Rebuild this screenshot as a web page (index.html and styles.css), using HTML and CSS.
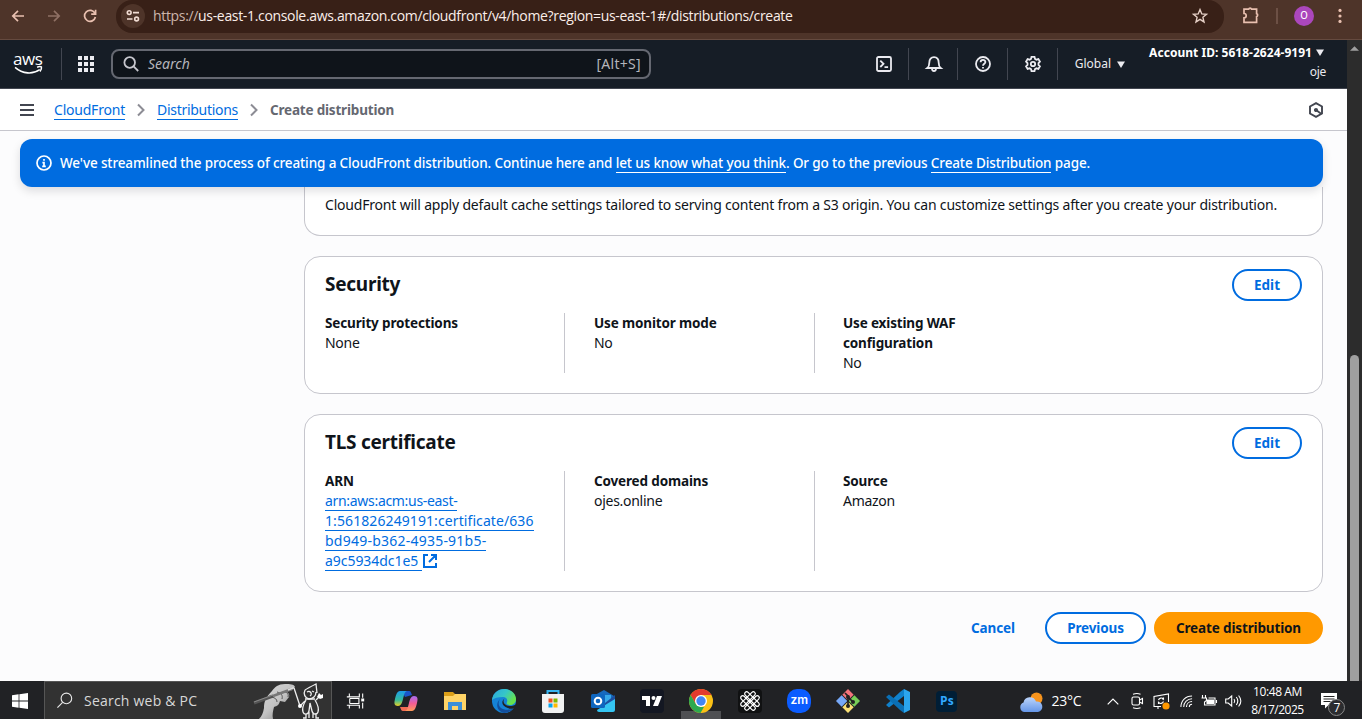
FILE: index.html
```html
<!DOCTYPE html>
<html lang="en">
<head>
<meta charset="utf-8">
<title>Create distribution</title>
<link rel="stylesheet" href="styles.css">
</head>
<body>
<div class="chrome">
  <svg class="nav-ic" viewBox="0 0 16 16"><path d="M14 8H2.8M8 2.8 2.8 8 8 13.2"/></svg>
  <svg class="nav-ic dim" viewBox="0 0 16 16"><path d="M2 8h11.2M8 2.8 13.2 8 8 13.2"/></svg>
  <svg class="nav-ic" viewBox="0 0 16 16"><path d="M13 5.5A5.5 5.5 0 1 0 13.4 9M13.6 1.8v4.4H9.2"/></svg>
  <div class="omnibox">
    <span class="site"><svg viewBox="0 0 14 14"><circle cx="3.2" cy="3.6" r="1.9"/><path d="M7 3.6h6M1 10h5.5"/><circle cx="10.6" cy="10" r="1.9"/></svg></span>
    <span class="url"><i>https://</i>us-east-1.console.aws.amazon.com/cloudfront/v4/home?region=us-east-1#/distributions/create</span>
    <svg class="star" viewBox="0 0 16 16"><path d="m8 1.600 1.800 4.300 4.700.4-3.600 3 1.100 4.600L8 11.400l-4 2.500 1.100-4.600-3.600-3 4.700-.4z"/></svg>
  </div>
  <svg class="puzzle" viewBox="0 0 18 18"><path d="M2 3.200h4.600a1.600 1.600 0 0 1 3 0h5v4.400a1.600 1.600 0 0 1 0 3v5.800H2v-4.500a2.200 2.200 0 0 0 0-4.400z"/></svg>
  <span class="chrome-sep"></span>
  <span class="avatar">O</span>
  <svg class="dots" viewBox="0 0 4 16"><circle cx="2" cy="2.400" r="1.600"/><circle cx="2" cy="8" r="1.600"/><circle cx="2" cy="13.400" r="1.600"/></svg>
</div>

<div class="viewport">
  <div class="page">
    <header class="aws">
      <div class="logo"><span class="aws-word">aws</span><svg viewBox="0 0 32 10"><path d="M.5 1.500C9 9 20 9.500 28 4"/><path d="M25 1.400c2-.9 4-.8 4.800-.4.300 1.300-.3 3.500-1.600 5"/></svg></div>
      <svg class="grid" viewBox="0 0 16 16"><path d="M0 0h4v4H0zM6 0h4v4H6zM12 0h4v4h-4zM0 6h4v4H0zM6 6h4v4H6zM12 6h4v4h-4zM0 12h4v4H0zM6 12h4v4H6zM12 12h4v4h-4z"/></svg>
      <div class="search">
        <svg viewBox="0 0 16 16"><circle cx="6.700" cy="6.500" r="5.300"/><path d="m10.600 10.400 4.600 4.600"/></svg>
        <span class="ph">Search</span><span class="key">[Alt+S]</span>
      </div>
      <div class="tools">
        <span class="tool"><svg viewBox="0 0 16 16"><rect x="1" y="1" width="14" height="14" rx="1.500"/><path d="m4.300 4.600 3.200 3.200-3.200 3.200M8.500 11.200h3.600"/></svg></span>
        <span class="tool"><svg viewBox="0 0 16 16"><path d="M1.300 12h13.400c-1.700-1.300-2-2.800-2-5.300C12.700 3.300 10.900 1.100 8 1.100S3.300 3.300 3.300 6.700c0 2.500-.3 4-2 5.300zM6 12.500c0 3.300 4 3.300 4 0"/></svg></span>
        <span class="tool"><svg viewBox="0 0 16 16"><circle cx="8" cy="8" r="7"/><path d="M5.600 6.300c0-3.100 4.800-3.100 4.800-.2C10.400 7.900 8 7.800 8 9.800M8 11v1.600"/></svg></span>
        <span class="tool"><svg viewBox="0 0 16 16"><path d="M6.500.9h3l.5 2 1.400.8 2-.6 1.500 2.500L13.500 7v2l1.400 1.400-1.500 2.500-2-.6-1.400.8-.5 2h-3l-.5-2-1.400-.8-2 .6-1.500-2.500L2.500 9V7L1.100 5.600l1.500-2.500 2 .6L6 2.900z"/><circle cx="8" cy="8" r="2.200"/></svg></span>
      </div>
      <div class="region"><span class="t-global">Global</span><svg class="caret" viewBox="0 0 8 7"><path d="M0 .5h8L4 7z"/></svg></div>
      <div class="account"><div class="acc-line"><span class="t-acc">Account ID: 5618-2624-9191</span><svg class="caret" viewBox="0 0 8 7"><path d="M0 .5h8L4 7z"/></svg></div><div><span class="t-oje">oje</span></div></div>
    </header>

    <nav class="crumbs">
      <svg class="burger" viewBox="0 0 14 12"><path d="M0 1h14M0 6h14M0 11h14"/></svg>
      <a class="lnk c1">CloudFront</a>
      <svg class="chev" viewBox="0 0 8 14"><path d="m1 1.500 5.500 5.500L1 12.500"/></svg>
      <a class="lnk c2">Distributions</a>
      <svg class="chev" viewBox="0 0 8 14"><path d="m1 1.500 5.500 5.500L1 12.500"/></svg>
      <span class="here">Create distribution</span>
      <svg class="hex" viewBox="0 0 16 16"><path d="M8 1.100 14 4.500v7L8 14.900 2 11.500v-7z"/><path d="M13.500 12 8 8"/><circle cx="8" cy="8" r="1.100"/></svg>
    </nav>

    <div class="flash">
      <svg viewBox="0 0 16 16"><circle cx="8" cy="8" r="7"/><path d="M8 4v1.800M6.400 7.600H8v3.700M6.200 11.400h3.600"/></svg>
      <span class="t-flash">We've streamlined the process of creating a CloudFront distribution. Continue here and <a>let us know what you think</a>. Or go to the previous <a>Create Distribution</a> page.</span>
    </div>

    <main>
      <section class="card cut"><span class="t-body">CloudFront will apply default cache settings tailored to serving content from a S3 origin. You can customize settings after you create your distribution.</span></section>

      <section class="card sec">
        <div class="head"><h2>Security</h2><button class="btn edit">Edit</button></div>
        <div class="cols">
          <div><b>Security protections</b><p>None</p></div>
          <div><b>Use monitor mode</b><p>No</p></div>
          <div><b>Use existing WAF<br>configuration</b><p>No</p></div>
        </div>
      </section>

      <section class="card tls">
        <div class="head"><h2>TLS certificate</h2><button class="btn edit">Edit</button></div>
        <div class="cols">
          <div><b>ARN</b><p class="arn"><a class="lnk a1">arn:aws:acm:us-east-</a><br><a class="lnk a2">1:561826249191:certificate/636</a><br><a class="lnk a3">bd949-b362-4935-91b5-</a><br><a class="lnk a4">a9c5934dc1e5 </a><svg viewBox="0 0 14 14"><path d="M5 1H1v12h12V9M8 1h5v5M13 1 6 8"/></svg></p></div>
          <div><b>Covered domains</b><p>ojes.online</p></div>
          <div><b>Source</b><p>Amazon</p></div>
        </div>
      </section>

      <div class="actions"><a class="cancel">Cancel</a><button class="btn prev">Previous</button><button class="btn primary">Create distribution</button></div>
    </main>
  </div>
  <div class="scroll"><svg viewBox="0 0 10 5"><path d="M0 5 5 0l5 5z"/></svg><span class="thumb"></span></div>
</div>

<footer class="taskbar">
  <div class="start"><svg viewBox="0 0 16 16"><path d="M0 2.300 6.600 1.300v6.300H0zM7.400 1.200 16 0v7.600H7.400zM0 8.400h6.600v6.300L0 13.700zM7.400 8.400H16V16l-8.600-1.200z"/></svg></div>
  <div class="tsearch">
    <svg class="mag" viewBox="0 0 18 18"><circle cx="11" cy="6.800" r="5.600"/><path d="M7 11 1.500 16.500"/></svg>
    <span class="t-web">Search web &amp; PC</span>
    <svg class="hand" viewBox="0 0 74 36">
      <defs><linearGradient id="hg" x1="0" y1="0" x2="1" y2="1"><stop offset="0" stop-color="#d8d8d8"/><stop offset=".5" stop-color="#c4c4c4"/><stop offset="1" stop-color="#777"/></linearGradient></defs>
      <path fill="url(#hg)" d="M8 36c3-3 4-6 5-11 0-7 2-11 8-17 3-4 6-7 13-7 5 0 9 0 10 3l-3 3-7 2c3 0 5 2 4 5l-4 5-5-1c-1 4-3 5-6 6-1 4-2 8-1 12z"/>
      <path fill="none" stroke="#555" d="M26 9c4 1 6 3 5 7M21 14c3 1 5 2 5 5M33 9c3 0 5 2 4 5"/>
      <path stroke="#555" stroke-width="3.400" d="M3 20 22 13"/><path stroke="#8a8a8a" stroke-width="1" d="M3 19 22 12"/><path stroke="#777" stroke-width="2.400" d="m22 13 19-7"/><path stroke="#ddd" stroke-width="1.500" d="m37 7 6-2.500"/>
      <g fill="none" stroke="#eee" stroke-width="1.300"><path d="m43 5 6 18 5-5"/><path d="M54 7c3-2 7-4 11-6l1 9M54 7c-2 4 0 8 4 9 4 0 7-3 7-7"/><path d="M56 9c3-2 6 2 3 4M61 8l2 1M54 16h10M55 17c-3 5-4 9-3 12 1 3 5 3 6-1l1-8 2 8c1 4 5 4 6 1 1-3 0-7-3-12M65 17l4-4M55 31v4h-3M58 29v6M62 29v6M65 30v5h3"/></g>
      <circle cx="49" cy="23" r="2" fill="#fff"/><path fill="#fff" d="m68 10 2 2 2-1v4l-3 1-3-2z"/>
    </svg>
  </div>
  <div class="apps">
    <span class="app"><svg class="tv" viewBox="0 0 24 24"><path d="M4 3v4h12V3M4 21v-4h12v4M4.500 9h11v6h-11M1 7h3M1 17h3M4.500 9v6M20 3v5M20 14v7" fill="none" stroke="#fff" stroke-width="1.300"/><path d="M18.300 9h3.500v3.500h-3.500z" fill="#fff"/></svg></span>
    <span class="app"><svg viewBox="0 0 24 24"><defs><linearGradient id="c1" x1="0" y1="0" x2="0" y2="1"><stop offset="0" stop-color="#1c9ceb"/><stop offset=".6" stop-color="#35bb9b"/><stop offset="1" stop-color="#e8cf25"/></linearGradient><linearGradient id="c2" x1="0" y1="0" x2="0" y2="1"><stop offset="0" stop-color="#a46cf5"/><stop offset=".5" stop-color="#f45d94"/><stop offset="1" stop-color="#ff9b58"/></linearGradient></defs><path fill="#1a56c8" d="M8 2h7c2 0 2 2 3 4l-7 2z"/><path fill="url(#c1)" d="M6 2h7c-3 1-3 5-4 8-1 4-2 7-5 7-4 0-4-3-3-7C2 6 3 2 6 2z"/><path fill="#f26c55" d="M8 18h8l-3 4H9c-2 0-2-2-3-4z"/><path fill="url(#c2)" d="M18 22h-7c3-1 3-5 4-8 1-4 2-7 5-7 4 0 4 3 3 7-1 4-2 8-5 8z"/></svg></span>
    <span class="app"><svg viewBox="0 0 24 24"><path fill="#dc9f18" d="M1 3h9l2 2h10v4H1z"/><path fill="#ffd467" d="M1 7h9l2-2h11v16H1z"/><path fill="#3c8fd8" d="M5 13h14v8h-4v-4H9v4H5z"/></svg></span>
    <span class="app"><svg viewBox="0 0 24 24"><defs><linearGradient id="e1" x1="0" y1="0" x2="1" y2=".5"><stop offset="0" stop-color="#2ba7e0"/><stop offset=".55" stop-color="#36c6c8"/><stop offset="1" stop-color="#67e34c"/></linearGradient></defs><circle cx="12" cy="12" r="12" fill="#1583d6"/><path fill="#134e9c" d="M8 10c-4 6 1 13 13 10-3 3-6 4-9 4C5 22 3 15 8 10z"/><path fill="#212225" d="M12.500 9.500c-2.500 3 0 7.500 5 7.500 3 0 5-.5 7-2l-1 3.500c-3 2-7 1.500-10-.5-3.500-2-4.500-5.500-1-8.500z"/><path fill="url(#e1)" d="M0 11C1 4 6 0 12 0c7 0 12 5 12 10 0 4-3 6-6 6-3 0-4-1-3-3 1-3-1-5-4-5-5 0-9 1-11 3z"/></svg></span>
    <span class="app"><svg viewBox="0 0 24 24"><path d="M6.500 6V2h11v4" fill="none" stroke="#37b5f0" stroke-width="2"/><path fill="#f2f2f2" d="M1 5h22v16q0 3-3 3H4q-3 0-3-3z"/><path fill="#f15022" d="M7.500 9.500h4v4h-4z"/><path fill="#7fb900" d="M12.500 9.500h4v4h-4z"/><path fill="#05a5ef" d="M7.500 14.500h4v4h-4z"/><path fill="#ffb900" d="M12.500 14.500h4v4h-4z"/></svg></span>
    <span class="app"><svg viewBox="0 0 24 24"><path fill="#1769bd" d="m13 1 10 6v9H4V6z"/><path fill="#37a9ea" d="M7 6h13v9H7z"/><path fill="#1e4f9f" d="m24 6-10 8v5l10-7z"/><path fill="#35c5f2" d="M24 10v11q0 2-2 2H8q-2 0-2-2z"/><rect y="5" width="14" height="14" rx="1.500" fill="#0f66bf"/><circle cx="7" cy="12" r="3.300" fill="none" stroke="#fff" stroke-width="2"/></svg></span>
    <span class="app"><svg viewBox="0 0 24 24"><rect width="24" height="24" rx="4" fill="#131722"/><path fill="#fff" d="M2 7h8v10H6v-6H2zM17 7h5l-4 10h-5z"/><circle cx="13.500" cy="9" r="2" fill="#fff"/></svg></span>
    <span class="app on"><svg viewBox="0 0 24 24"><circle cx="12" cy="12" r="12" fill="#fbc116"/><path fill="#e33b2e" d="M1.600 6A12 12 0 0 1 22.400 6H12l-5.200 9z"/><path fill="#2da94f" d="M1.600 6 6.800 15l5.200 3h3l-3.500 6A12 12 0 0 1 1.600 6z"/><circle cx="12" cy="12" r="6" fill="#fff"/><circle cx="12" cy="12" r="4.700" fill="#4285f4"/></svg></span>
    <span class="app"><svg viewBox="0 0 24 24"><rect width="24" height="24" rx="4" fill="#101112"/><g fill="none" stroke="#fff" stroke-width="1.200"><g transform="rotate(45 12 12)"><rect x="2.500" y="7.200" width="19" height="4" rx="2"/><rect x="2.500" y="12.800" width="19" height="4" rx="2"/></g><g transform="rotate(-45 12 12)"><rect x="2.500" y="7.200" width="19" height="4" rx="2"/><rect x="2.500" y="12.800" width="19" height="4" rx="2"/></g></g></svg></span>
    <span class="app"><span class="zm">zm</span></span>
    <span class="app"><svg viewBox="0 0 24 24"><g transform="rotate(45 12 12)"><path fill="#76a8f8" d="M3.500 12.500h8v8h-8z"/><path fill="#f2737c" d="M3.500 3.500h8v8h-8z"/><path fill="#78ce58" d="M12.500 3.500h8v8h-8z"/><path fill="#fadf75" d="M12.500 12.500h8v8h-8z"/></g><path d="M9 4l3 3v11M12 8l5 5" stroke="#222" stroke-width="1.700" fill="none"/><circle cx="12" cy="8" r="2" fill="#222"/><circle cx="17" cy="13" r="2" fill="#222"/><circle cx="12" cy="17" r="2" fill="#222"/></svg></span>
    <span class="app"><svg viewBox="0 0 24 24"><path fill="#1081cc" d="M18 0v7L3 18.500 0 16 14 3z"/><path fill="#0a6fb5" d="M18 24v-7L3 5.500 0 8l14 13z"/><path fill="#2ba5ee" d="m18 0 6 3v18l-6 3z"/></svg></span>
    <span class="app"><span class="ps">Ps</span></span>
  </div>
  <div class="tray">
    <svg class="weather" viewBox="0 0 24 20"><defs><linearGradient id="wg" x1="0" y1="0" x2="0" y2="1"><stop offset="0" stop-color="#bcd5fb"/><stop offset="1" stop-color="#6596e8"/></linearGradient></defs><circle cx="17.500" cy="6.500" r="6" fill="#f7941d"/><path fill="url(#wg)" d="M5 20a5 5 0 0 1-.5-9.500A6.500 6.500 0 0 1 17 9.500 5.300 5.300 0 0 1 19 20z"/></svg>
    <span class="temp">23°C</span>
    <svg class="up" viewBox="0 0 12 7"><path d="m.7 6.300 5.300-5.300 5.300 5.300"/></svg>
    <svg class="ti meet" viewBox="0 0 12 16"><rect x="1" y="4" width="7.500" height="8" rx="1.500"/><path d="m8.500 7 3-1.500v5L8.500 9M2 1.300q4-1.500 7.500 0M2 14.700q4 1.500 7.500 0"/></svg>
    <svg class="ti upd" viewBox="0 0 17 17"><path d="M8 13.500H1V3.500L15.500 1v8M5 13.500V16"/><path d="M5.500 7a3 3 0 0 1 5-1V4.500M10.500 6H9M10.500 8.500a3 3 0 0 1-5 1V11"/><circle cx="13" cy="13" r="3.600" fill="#ff9800" stroke="none"/></svg>
    <svg class="ti wifi" viewBox="0 0 14 14"><path d="M1 13C1 6 6 1 13 1M4 13c0-5 4-9 9-9M7 13c0-3.500 2.500-6 6-6M10 13c0-2 1-3 3-3"/></svg>
    <svg class="ti bat" viewBox="0 0 16 12"><path d="M1.500 0v3M4.500 0v3M.5 3h5v2.500l-2 1.500v3H14V3H7.500M15.500 5v3"/><path fill="#fff" d="M6 5h6.500v3.500H6z"/></svg>
    <svg class="ti vol" viewBox="0 0 17 14"><path d="M.7 5v4h2.500l3.500 3V2L3.200 5zM9 5q1.500 2 0 4M11.300 3q3 4 0 8M13.600 1.500q4.500 5.500 0 11"/></svg>
    <div class="clock"><span class="t-time">10:48 AM</span><span class="t-date">8/17/2025</span></div>
    <div class="note"><svg viewBox="0 0 16 16"><path fill="#fff" d="M0 0h16v12H7.500L4 15.500V12H0z"/><path stroke="#222" d="M2.500 3.500h11M2.500 6h11M2.500 8.500h7"/></svg><span class="badge">7</span></div>
  </div>
</footer>
</body>
</html>
```
FILE: styles.css
```css
* { box-sizing: border-box; }
body { margin: 0; width: 1362px; height: 719px; overflow: hidden; display: flex; flex-direction: column; font: 14px/20px "Noto Sans", "Open Sans", sans-serif; color: #0f141a; background: #212225; }
svg { display: block; flex: none; overflow: visible; fill: none; }
h2, p { margin: 0; }

.chrome { height: 40px; flex: none; display: flex; align-items: flex-start; background: #4e3429; border-bottom: 1px solid #654a3f; padding-left: 10px; }
.nav-ic { width: 16px; height: 16px; margin-top: 8px; margin-right: 20px; stroke: #e9c0b0; stroke-width: 1.7; }
.dim { stroke: #8f7064; }
.omnibox { width: 1108px; height: 33px; margin-left: -2px; border-radius: 16px; background: #382017; display: flex; padding: 4px 16px 0 5px; }
.site { width: 24px; height: 24px; border-radius: 50%; background: #4e3429; display: flex; align-items: center; justify-content: center; }
.site svg { width: 14px; height: 14px; stroke: #f1dcd3; stroke-width: 1.6; }
.url { margin-left: 8px; font: 14px/24px "Open Sans", sans-serif; letter-spacing: -.333px; color: #fbeee9; white-space: nowrap; }
.url i { font-style: normal; color: #cdb5ab; }
.star { width: 16px; height: 16px; margin: 4px 0 0 auto; stroke: #e6d0c7; stroke-width: 1.4; }
.puzzle { width: 18px; height: 18px; margin: 6px 0 0 18px; stroke: #e9c0b0; stroke-width: 1.7; }
.chrome-sep { width: 2px; height: 16px; margin: 8px 0 0 16px; background: #6c5045; }
.avatar { width: 20px; height: 20px; margin: 6px 0 0 16px; border-radius: 50%; background: #ab47bc; color: #fff; font: 11px/20px Roboto, sans-serif; text-align: center; }
.dots { width: 4px; height: 16px; margin: 8px 0 0 24px; fill: #e9c0b0; }

.viewport { height: 641px; display: flex; }
.page { width: 1347px; background: #fcfcfd; display: flex; flex-direction: column; }
.aws { height: 49px; flex: none; background: #161d26; border-bottom: 1px solid #424650; display: flex; align-items: center; color: #ebebf0; }
.logo { width: 62px; height: 32px; border-right: 1px solid #424650; padding-left: 13px; display: flex; flex-direction: column; }
.aws-word { font: 500 17px/17px "Open Sans", sans-serif; letter-spacing: -.4px; color: #fff; margin: 2px 0 0; }
.logo svg { width: 32px; height: 9px; margin-top: -1px; stroke: #fff; stroke-width: 1.7; }
.grid { width: 16px; height: 16px; margin-left: 16px; fill: #ebebf0; }
.search { width: 540px; height: 30px; margin-left: 17px; border: 2px solid #656871; border-radius: 8px; background: #0f141a; display: flex; align-items: center; padding: 0 8px 0 10px; color: #b4b4bb; }
.search svg { width: 16px; height: 16px; stroke: #c6c6cd; stroke-width: 1.8; }
.ph { font-style: italic; margin-left: 9px; }
.key { margin-left: auto; letter-spacing: .3px; }
.tools { display: flex; margin-left: 208px; }
.tool { width: 49.7px; height: 32px; border-right: 1px solid #424650; display: flex; align-items: center; justify-content: center; padding-left: 1px; }
.tool svg { width: 16px; height: 16px; stroke: #ebebf0; stroke-width: 1.8; }
.region { display: flex; align-items: center; margin-left: 17px; font-size: 12px; }
.caret { width: 8px; height: 7px; fill: #ebebf0; margin-left: 6px; }
.account { margin-left: auto; margin-right: 21px; padding-bottom: 4px; text-align: right; font-size: 12px; line-height: 19px; }
.acc-line { display: flex; align-items: center; font-weight: 700; color: #fff; margin-right: 2px; }
.t-acc { letter-spacing: .03px; }
.acc-line .caret { margin-left: 4px; }
.t-oje { letter-spacing: -.3px; }

.crumbs { height: 42px; flex: none; background: #fff; border-bottom: 1px solid #c6c6cd; display: flex; align-items: center; padding-left: 20px; }
.burger { width: 14px; height: 12px; stroke: #424650; stroke-width: 2; margin-right: 20px; }
.lnk { color: #006ce0; border-bottom: 1px solid #006ce0; }
.crumbs .lnk { line-height: 18px; padding-top: 1px; margin-top: 1px; }
.chev { width: 8px; height: 14px; stroke: #8c8c94; stroke-width: 2; margin: 0 12px; }
.c1 { letter-spacing: -.214px; }
.c2 { letter-spacing: -.288px; }
.here { font-weight: 700; font-size: 13.5px; letter-spacing: -.19px; color: #656871; }
.hex { width: 16px; height: 16px; margin-left: auto; margin-right: 23px; stroke: #424650; stroke-width: 1.9; }

.flash { position: relative; z-index: 1; flex: none; width: 1303px; height: 48px; margin: 8px 0 0 20px; border-radius: 12px; background: #006ce0; box-shadow: 0 4px 10px rgba(0, 7, 22, .13); color: #fff; display: flex; align-items: center; padding-left: 16px; font-weight: 500; font-size: 13.5px; letter-spacing: -.12px; }
.flash svg { width: 16px; height: 16px; stroke: #fff; stroke-width: 1.7; margin-right: 8px; }
.flash a { border-bottom: 1px solid #fff; }

main { padding: 0 24px 0 304px; letter-spacing: -.28px; }
.card { background: #fff; border: 1px solid #c6c6cd; border-radius: 16px; padding: 0 20px; }
.cut { height: 49px; border-top: 0; border-radius: 0 0 16px 16px; padding-top: 8px; white-space: nowrap; letter-spacing: -.195px; }
.sec { height: 138px; margin-top: 20px; }
.tls { height: 178px; margin-top: 20px; }
.head { display: flex; justify-content: space-between; padding-top: 12px; height: 56px; }
h2 { font-size: 19px; line-height: 24px; padding-top: 3px; letter-spacing: -.26px; }
.btn { height: 32px; border: 2px solid #006ce0; border-radius: 16px; background: #fff; color: #006ce0; font: 700 13.5px/20px "Noto Sans", sans-serif; letter-spacing: -.14px; padding: 0; white-space: nowrap; }
.edit { width: 70px; letter-spacing: 0; }
.cols { display: grid; grid-template-columns: 240px 250px 1fr; }
.cols > div { padding-left: 29px; border-right: 1px solid #c6c6cd; white-space: nowrap; }
.cols > div:first-child { padding-left: 0; }
.cols > div:last-child { border-right: 0; padding-left: 28px; }
.cols b { display: block; font-size: 13.5px; letter-spacing: -.15px; }
.a1 { letter-spacing: -.31px; }
.a2 { letter-spacing: .09px; }
.a3 { letter-spacing: .23px; }
.a4 { letter-spacing: -.05px; }
.arn svg { display: inline-block; width: 14px; height: 14px; vertical-align: -2px; stroke: #006ce0; stroke-width: 2; margin-left: 1px; }
.actions { display: flex; justify-content: flex-end; align-items: center; margin-top: 20px; }
.cancel { color: #006ce0; font-weight: 700; font-size: 13.5px; letter-spacing: -.1px; margin-right: 30px; }
.prev { width: 101px; }
.primary { width: 169px; margin-left: 8px; background: #ff9900; border-color: #ff9900; color: #0f141a; }

.scroll { width: 15px; background: #2c2c2c; display: flex; flex-direction: column; align-items: center; }
.scroll svg { width: 9px; height: 5px; margin-top: 6px; fill: #9f9f9f; }
.thumb { width: 9px; height: 326px; margin-top: auto; background: #9f9f9f; border-radius: 5px 5px 0 0; }

.taskbar { height: 38px; display: flex; background: #212225; color: #fff; font-family: "Open Sans", sans-serif; }
.start { width: 44px; display: flex; align-items: center; padding: 2px 0 0 12px; }
.start svg { width: 16px; height: 16px; fill: #fff; }
.tsearch { width: 288px; background: #323232; border: 1px solid #565656; border-bottom: 0; display: flex; align-items: center; padding-left: 11px; color: #d8d8d8; }
.mag { width: 17px; height: 17px; stroke: #e8e8e8; stroke-width: 1.2; }
.t-web { margin-left: 11px; letter-spacing: .22px; padding-top: 1px; }
.hand { width: 74px; height: 36px; margin: 1px 6px 0 auto; }
.apps { display: flex; }
.app { width: 49.2px; display: flex; align-items: center; justify-content: center; padding-top: 2px; }
.app:first-child { padding-right: 2px; }
.app svg { width: 24px; height: 24px; }
.app .tv { width: 20px; height: 20px; }
.on { background: linear-gradient(#4f5053, #4f5053) center bottom / 40px 8px no-repeat; }
.zm { width: 24px; height: 24px; border-radius: 10px; background: #0b5cff; font: 600 12px/21px Inter, sans-serif; text-align: center; }
.ps { width: 21px; height: 21px; border-radius: 4px; background: #001e36; color: #31a8ff; font: 700 12px/20px "Open Sans", sans-serif; text-align: center; }
.tray { flex: 1; display: flex; align-items: center; padding-top: 2px; margin-left: 48px; }
.weather { width: 24px; height: 20px; margin-top: 2px; }
.temp { margin-left: 8px; letter-spacing: -.2px; }
.up { width: 12px; height: 7px; margin-left: 26px; stroke: #fff; stroke-width: 1.2; }
.ti { stroke: #fff; stroke-width: 1.1; }
.meet { width: 12px; height: 16px; margin-left: 12px; }
.upd { width: 17px; height: 17px; margin-left: 10px; }
.wifi { width: 13px; height: 13px; margin-left: 10px; }
.bat { width: 16px; height: 12px; margin-left: 8px; }
.vol { width: 17px; height: 14px; margin-left: 8px; }
.clock { width: 64px; margin-left: 3px; display: flex; flex-direction: column; align-items: center; font-size: 12px; line-height: 18px; white-space: nowrap; }
.t-time { letter-spacing: -.38px; }
.t-date { letter-spacing: -.5px; }
.note { position: relative; margin-left: 12px; }
.note svg { width: 16px; height: 16px; }
.badge { position: absolute; left: 7px; top: 6px; width: 17px; height: 17px; border-radius: 50%; border: 1px solid #888; background: #2b2c2f; font-size: 12px; line-height: 15px; text-align: center; }
```
